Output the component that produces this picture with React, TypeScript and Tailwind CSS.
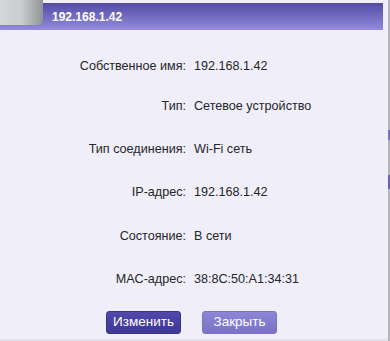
import React from "react";

const rows: { label: string; value: string; mt: string }[] = [
  { label: "Собственное имя:", value: "192.168.1.42", mt: "mt-[27px]" },
  { label: "Тип:", value: "Сетевое устройство", mt: "mt-[22px]" },
  { label: "Тип соединения:", value: "Wi-Fi сеть", mt: "mt-[25px]" },
  { label: "IP-адрес:", value: "192.168.1.42", mt: "mt-[25px]" },
  { label: "Состояние:", value: "В сети", mt: "mt-[26px]" },
  { label: "MAC-адрес:", value: "38:8C:50:A1:34:31", mt: "mt-[25px]" },
];

export default function App() {
  return (
    <div
      className="relative w-[390px] h-[341px] overflow-hidden bg-[#efeef9] text-[#262626]"
      style={{ fontFamily: '"Liberation Sans", Arial, sans-serif' }}
    >
      {/* right edge strip */}
      <div className="absolute top-0 right-0 h-full w-[2px] bg-[#b4b4bc]" />
      <div className="absolute top-[130px] right-0 h-[10px] w-[2px] bg-[#7a72c0]" />
      <div className="absolute top-[175px] right-0 h-[14px] w-[2px] bg-[#6a62b4]" />

      <div className="w-[383px] h-[339px] flex flex-col">
        <div className="mt-[3px] h-[27px] flex items-center pl-[52px] bg-gradient-to-b from-[#554ba5] to-[#938bdb] text-white text-[12px] font-bold">
          192.168.1.42
        </div>

        <div className="flex flex-col">
          {rows.map((r) => (
            <div key={r.label} className={`${r.mt} h-[18px] flex items-center text-[12.6px]`}>
              <div className="w-[186px] text-right">{r.label}</div>
              <div className="ml-[8px]">{r.value}</div>
            </div>
          ))}
        </div>

        <div className="mt-[23px] flex gap-[21px] pl-[106px]">
          <button className="w-[75px] h-[23px] rounded-[3px] border border-[#3c3488] bg-gradient-to-b from-[#5048ac] to-[#3f3894] text-white text-[13.5px]">
            Изменить
          </button>
          <button className="w-[75px] h-[23px] rounded-[3px] border border-[#7a72c4] bg-gradient-to-b from-[#8d86d6] to-[#7a72c6] text-white text-[13.5px]">
            Закрыть
          </button>
        </div>
      </div>
      <div className="absolute left-0 bottom-0 w-[388px] h-[2px] bg-[#e2e1ec]" />

      {/* gray tab top-left */}
      <div className="absolute top-0 left-0 w-[43px] h-[25px] rounded-br-[5px] bg-gradient-to-r from-[#d3d7d8] via-[#c9cdce] to-[#8e9494]" />
    </div>
  );
}
